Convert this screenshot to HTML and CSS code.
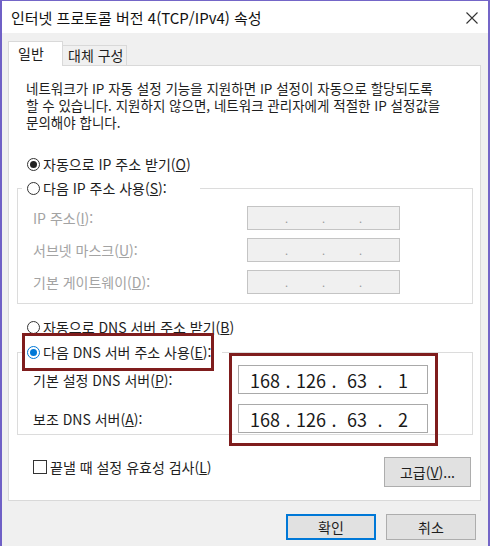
FILE: index.html
```html
<!doctype html>
<html lang="ko">
  <head>
    <meta charset="UTF-8" />
    <title>인터넷 프로토콜 버전 4(TCP/IPv4) 속성</title>
    <link rel="stylesheet" href="styles.css">
  </head>
  <body>
    <div class="window">
      <div class="titlebar">
        <span class="title">인터넷 프로토콜 버전 4(TCP/IPv4) 속성</span>
        <svg class="close" width="12" height="12" viewBox="0 0 12 12">
          <path d="M0.5 0.5 L11.5 11.5 M11.5 0.5 L0.5 11.5" stroke="#333" stroke-width="1.1" fill="none" />
        </svg>
      </div>

      <div class="content">
        <div class="tabs">
          <div class="tab active">일반</div>
          <div class="tab">대체 구성</div>
        </div>

        <div class="panel">
          <p class="desc">
            네트워크가 IP 자동 설정 기능을 지원하면 IP 설정이 자동으로 할당되도록<br>
            할 수 있습니다. 지원하지 않으면, 네트워크 관리자에게 적절한 IP 설정값을<br>
            문의해야 합니다.
          </p>

          <div class="option"><span class="radio checked"></span>자동으로 IP 주소 받기(<u>O</u>)</div>

          <fieldset class="group">
            <legend class="legend legend-ip"><span class="radio"></span>다음 IP 주소 사용(<u>S</u>):</legend>
            <div class="rows disabled">
              <span class="label">IP 주소(<u>I</u>):</span>
              <div class="ipbox small"><span></span><i>.</i><span></span><i>.</i><span></span><i>.</i><span></span></div>
              <span class="label">서브넷 마스크(<u>U</u>):</span>
              <div class="ipbox small"><span></span><i>.</i><span></span><i>.</i><span></span><i>.</i><span></span></div>
              <span class="label">기본 게이트웨이(<u>D</u>):</span>
              <div class="ipbox small"><span></span><i>.</i><span></span><i>.</i><span></span><i>.</i><span></span></div>
            </div>
          </fieldset>

          <div class="option dns-auto"><span class="radio"></span>자동으로 DNS 서버 주소 받기(<u>B</u>)</div>

          <fieldset class="group dns">
            <legend class="legend legend-dns"><span class="radio focus"></span>다음 DNS 서버 주소 사용(<u>E</u>):</legend>
            <div class="rows dns-rows">
              <span class="label">기본 설정 DNS 서버(<u>P</u>):</span>
              <div class="ipbox big"><span>168</span><i>.</i><span>126</span><i>.</i><span>63</span><i>.</i><span>1</span></div>
              <span class="label">보조 DNS 서버(<u>A</u>):</span>
              <div class="ipbox big"><span>168</span><i>.</i><span>126</span><i>.</i><span>63</span><i>.</i><span>2</span></div>
            </div>
          </fieldset>

          <div class="footer-row">
            <div class="check"><span class="checkbox"></span>끝낼 때 설정 유효성 검사(<u>L</u>)</div>
            <button class="btn advanced">고급(<u>V</u>)...</button>
          </div>
        </div>

        <div class="buttons">
          <button class="btn ok">확인</button>
          <button class="btn">취소</button>
        </div>
      </div>

      <!-- annotation boxes -->
      <div class="mark mark-radio"></div>
      <div class="mark mark-dns"></div>
    </div>
  </body>
</html>
```

FILE: styles.css
```css
body {
  margin: 0;
  background: #f0f0f0;
  font-family: "Noto Sans CJK KR", "Noto Sans", sans-serif;
  color: #1e1e1e;
}
.window {
  position: relative;
  width: 490px;
  height: 546px;
  box-sizing: border-box;
  border-top: 1px solid #7466c8;
  border-left: 2px solid #6f60c6;
  border-right: 2px solid #7466c8;
  background: #f0f0f0;
  overflow: hidden;
}
.titlebar {
  height: 32px;
  background: #fff;
  display: flex;
  align-items: center;
  justify-content: space-between;
  padding: 0 10px 0 9px;
}
.title {
  font-size: 15px;
  color: #111;
}
.close {
  margin-top: 1px;
}
.content {
  padding: 8px 7px 0 6px;
}
.tabs {
  display: flex;
  height: 24px;
  position: relative;
  z-index: 1;
}
.tab {
  box-sizing: border-box;
  font-size: 14px;
  line-height: 18px;
  border: 1px solid #d9d9d9;
  border-bottom: none;
}
.tab.active {
  width: 55px;
  height: 25px;
  padding-left: 9px;
  background: #fff;
  line-height: 22px;
}
.tab:not(.active) {
  margin-top: 4px;
  height: 20px;
  width: 64px;
  padding-left: 5px;
  border-left: none;
  background: #f0f0f0;
}
.panel {
  background: #fff;
  border: 1px solid #d9d9d9;
  padding: 14px 7px 13px 8px;
  font-size: 14px;
}
.desc {
  margin: 0 0 0 9px;
  line-height: 17px;
  font-size: 13.5px;
}
.option {
  display: flex;
  align-items: center;
  height: 20px;
  margin: 23px 0 0 10px;
}
.dns-auto {
  margin-top: 13px;
}
.radio {
  width: 13px;
  height: 13px;
  box-sizing: border-box;
  border: 1px solid #333;
  border-radius: 50%;
  margin-right: 3px;
  display: inline-flex;
  align-items: center;
  justify-content: center;
  flex: none;
}
.radio.checked::after,
.radio.focus::after {
  content: "";
  width: 7px;
  height: 7px;
  border-radius: 50%;
  background: #222;
}
.radio.focus {
  border-color: #0078d7;
}
.radio.focus::after {
  background: #0078d7;
}
.group {
  margin: 4px 0 0;
  padding: 8px 0 9px 15px;
  border: 1px solid #dcdcdc;
  min-width: 0;
}
.group.dns {
  margin-top: 5px;
  padding: 3px 0 1px 15px;
}
.legend {
  display: flex;
  align-items: center;
  height: 20px;
  box-sizing: border-box;
  margin-left: -11px;
  padding: 0 0 0 5px;
}
.legend-ip {
  width: 178px;
}
.legend-dns {
  width: 200px;
}
.rows {
  display: grid;
  grid-template-columns: 214px 153px;
  grid-auto-rows: 24px;
  row-gap: 8px;
  align-items: center;
}
.rows.disabled .label {
  color: #a3a3a3;
}
.dns-rows {
  grid-template-columns: 205px 190px;
  grid-auto-rows: 29px;
  row-gap: 10px;
}
.ipbox {
  box-sizing: border-box;
  height: 100%;
  border: 1px solid #adadad;
  display: grid;
  align-items: center;
}
.ipbox i {
  font-style: normal;
  text-align: center;
}
.ipbox span {
  text-align: center;
}
.ipbox.small {
  background: #f0f0f0;
  border-color: #c4c4c4;
  grid-template-columns: 30px 7px 30px 7px 30px 7px 30px;
  padding-left: 5px;
  font-size: 11px;
  color: #9a9a9a;
}
.ipbox.big {
  background: #fff;
  border-color: #a9a9a9;
  grid-template-columns: 38px 8px 38px 8px 38px 8px 38px;
  padding-left: 7px;
  font-size: 18px;
  color: #1a1a1a;
}
.footer-row {
  display: flex;
  align-items: center;
  justify-content: space-between;
  margin: 22px 2px 0 16px;
}
.check {
  display: flex;
  align-items: center;
  margin-top: -10px;
}
.checkbox {
  width: 14px;
  height: 14px;
  box-sizing: border-box;
  border: 1px solid #333;
  margin-right: 3px;
}
.btn {
  font-family: "Noto Sans CJK KR", "Noto Sans", sans-serif;
  font-size: 14px;
  color: #1e1e1e;
  background: #e1e1e1;
  border: 1px solid #adadad;
  padding: 0;
}
.advanced {
  width: 87px;
  height: 30px;
}
.buttons {
  display: flex;
  justify-content: flex-end;
  gap: 10px;
  margin-top: 13px;
  padding-right: 5px;
}
.buttons .btn {
  width: 90px;
  height: 26px;
}
.btn.ok {
  border: 2px solid #0078d7;
}
.mark {
  position: absolute;
  box-sizing: border-box;
  border: 3px solid #7f1d1d;
}
.mark-radio {
  left: 20px;
  top: 332px;
  width: 192px;
  height: 38px;
}
.mark-dns {
  left: 227px;
  top: 352px;
  width: 209px;
  height: 93px;
}
```
